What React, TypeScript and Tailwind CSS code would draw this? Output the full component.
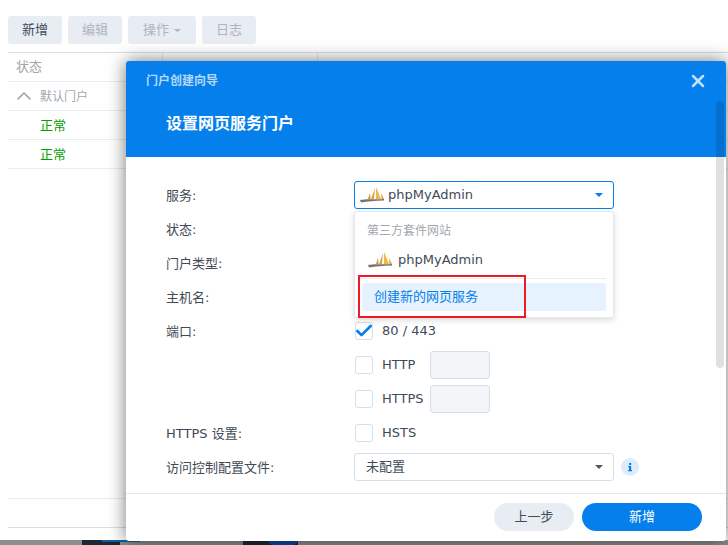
import { ChevronUp, X, Check } from "lucide-react";

const font = { fontFamily: '"DejaVu Sans", "Noto Sans CJK SC", sans-serif' };

// small sailboat style logo used for phpMyAdmin
const PmaLogo = () => (
  <svg width="24" height="16" viewBox="0 0 24 16" className="shrink-0">
    <path d="M15 1 L14 12 H11 Z" fill="#e3a436" />
    <path d="M16 0 L16 12 H21 Z" fill="#f1b648" />
    <path d="M10 6 L8 12 H10.5 Z" fill="#c98f3a" />
    <path d="M21 6 L21.5 12 H24 Z" fill="#d8a547" />
    <path d="M0 13 C5 11.5 14 12.5 24 12 V13.5 C15 14 7 14 1 15.5 Z" fill="#77736c" />
  </svg>
);

const Caret = ({ color, w, h }: { color: string; w: number; h: number }) => (
  <svg width={w} height={h} viewBox={`0 0 ${w} ${h}`} className="shrink-0">
    <path d={`M0 0 H${w} L${w / 2} ${h} Z`} fill={color} />
  </svg>
);

const Checkbox = ({ checked }: { checked?: boolean }) => (
  <div className="w-[18px] h-[18px] rounded-[3px] border border-[#d5dfe9] bg-white flex items-center justify-center shrink-0">
    {checked && <Check size={20} strokeWidth={3.2} className="text-[#057feb] shrink-0" />}
  </div>
);

const InfoDot = () => (
  <svg width="18" height="18" viewBox="0 0 18 18">
    <circle cx="9" cy="9" r="9" fill="#dcecfb" />
    <rect x="8" y="5" width="2.2" height="2" fill="#057feb" />
    <path d="M7.2 8 H10.2 V12 H11 V13.2 H7.2 V12 H8 V9.2 H7.2 Z" fill="#057feb" />
  </svg>
);

const toolbar = ["编辑", "操作", "日志"];

const fieldLabels = ["状态:", "门户类型:", "主机名:", "端口:"];

export default function App() {
  return (
    <div style={font} className="relative w-[728px] h-[545px] overflow-hidden bg-[#8d8d8d] text-[13px] text-[#414b55]">
      {/* desktop peeking out under the window */}
      <div className="absolute left-[82px] top-[540px] w-[38px] h-[5px] bg-[#1f2733]" />
      <div className="absolute left-[102px] top-[540px] w-[38px] h-[2px] bg-[#0f5f9e]" />
      <div className="absolute left-[243px] top-[540px] w-[55px] h-[5px] bg-[#1f2733]" />
      <div className="absolute left-[268px] top-[540px] w-[30px] h-[5px] rounded-b-full bg-[#0f47a0]" />

      {/* page behind the dialog */}
      <div className="relative h-[540px] bg-white pl-2">
        <div className="flex gap-1.5 pt-4">
          <div className="w-[54px] h-[28px] rounded-[3px] bg-[#e8ecf3] flex items-center justify-center text-[#414b55]">新增</div>
          {toolbar.map((t) => (
            <div
              key={t}
              className={`${t === "操作" ? "w-[68px] gap-[5px]" : "w-[54px]"} h-[28px] rounded-[3px] bg-[#e8ecf3] flex items-center justify-center text-[#b0b5bb]`}
            >
              {t}
              {t === "操作" && <Caret color="#b0b5bb" w={7} h={3} />}
            </div>
          ))}
        </div>
        <div className="mt-[8px] border-t border-[#d5dfe9] h-[29px] flex items-center relative">
          <span className="pl-2 text-[#a2a7ad]">状态</span>
          <div className="absolute left-[154px] top-0 h-[29px] w-px bg-[#e8ecf3]" />
          <div className="absolute left-[309px] top-0 h-[29px] w-px bg-[#e8ecf3]" />
        </div>
        <div className="border-t border-[#e8ecf3] h-[29px] flex items-center pl-1 gap-1 text-[12px] text-[#a2a7ad]">
          <ChevronUp size={24} strokeWidth={1.75} className="shrink-0" />
          <span className="pt-px">默认门户</span>
        </div>
        <div className="border-t border-[#e8ecf3] h-[29px] flex items-center pl-8 pt-0.5 text-[#00a000]">正常</div>
        <div className="border-t border-[#e8ecf3] h-[29px] flex items-center pl-8 pt-0.5 text-[#00a000]">正常</div>
        <div className="border-t border-[#e8ecf3]" />
        <div className="mt-[329px] border-t border-[#e8ecf3] h-[29px]" />
        <div className="border-t border-[#d5dfe9]" />
      </div>

      {/* dialog */}
      <div className="absolute left-[126px] top-[61px] w-[600px] h-[480px] bg-white rounded-[3px] shadow-[0_0_18px_rgba(0,0,0,0.55)] flex flex-col overflow-hidden">
        <div className="h-[96px] bg-[#057feb] relative shrink-0">
          <div className="pl-5 pt-[11px] text-[12px] leading-[18px] font-bold text-[#b4d9fa]">门户创建向导</div>
          <div className="pl-10 mt-[22px] text-[16px] leading-[24px] font-bold text-white">设置网页服务门户</div>
          <X size={20} strokeWidth={3} className="absolute right-[18px] top-[10px] text-[#c0dffa]" />
        </div>

        <div className="flex-1 flex pl-10 relative">
          <div className="w-[188px] pt-[25px] flex flex-col">
            <div className="h-[28px] flex items-center">服务:</div>
            <div className="mt-[6px] flex flex-col gap-[6px]">
              {fieldLabels.map((l) => (
                <div key={l} className="h-[28px] flex items-center">{l}</div>
              ))}
            </div>
            <div className="mt-[74px] h-[28px] flex items-center">HTTPS 设置:</div>
            <div className="mt-[6px] h-[28px] flex items-center whitespace-nowrap">访问控制配置文件:</div>
          </div>

          <div className="pt-[24px] w-[260px]">
            <div className="h-[28px] rounded-[3px] border border-[#057feb] flex items-center pl-[5px] pr-[10px] gap-1">
              <PmaLogo />
              <span className="flex-1">phpMyAdmin</span>
              <Caret color="#057feb" w={8} h={4} />
            </div>
            <div className="h-[108px]" />
            <div className="flex flex-col ml-px">
              <div className="h-[28px] mb-[3px] flex items-center"><Checkbox checked /><span className="ml-[9px]">80 / 443</span></div>
              <div className="h-[34px] flex items-center"><Checkbox /><span className="ml-[9px] w-[48px]">HTTP</span><div className="w-[60px] h-[28px] rounded-[3px] border border-[#d5dfe9] bg-[#f3f5f8]" /></div>
              <div className="h-[34px] flex items-center"><Checkbox /><span className="ml-[9px] w-[48px]">HTTPS</span><div className="w-[60px] h-[28px] rounded-[3px] border border-[#d5dfe9] bg-[#f3f5f8]" /></div>
              <div className="h-[34px] flex items-center"><Checkbox /><span className="ml-[9px]">HSTS</span></div>
            </div>
            <div className="mt-[3px] h-[28px] rounded-[3px] border border-[#d5dfe9] flex items-center pl-[11px] pr-[10px] w-[260px]">
              <span className="flex-1">未配置</span>
              <Caret color="#4f5963" w={8} h={4} />
            </div>
          </div>
          <div className="absolute left-[495px] top-[301px]">
            <InfoDot />
          </div>

          {/* dropdown menu */}
          <div className="absolute left-[228px] top-[54px] w-[260px] h-[107px] bg-white rounded-[3px] border border-[#e3e9f0] shadow-[0_2px_6px_rgba(0,0,0,0.15)] px-[7px]">
            <div className="pt-[10px] pl-[5px] text-[12px] text-[#a2a7ad] leading-[18px]">第三方套件网站</div>
            <div className="mt-[6px] h-[28px] flex items-center pl-[6px] gap-[6px]">
              <PmaLogo />
              <span>phpMyAdmin</span>
            </div>
            <div className="mt-1 border-t border-[#e8ecf3]" />
            <div className="mt-1 h-[28px] rounded-[3px] bg-[#e6f2fd] flex items-center pl-3 text-[#057feb]">创建新的网页服务</div>
          </div>
          {/* red annotation */}
          <div className="absolute left-[232px] top-[118px] w-[168px] h-[43px] border-2 border-[#ed1c24]" />
        </div>

        <div className="h-[48px] shrink-0 border-t border-[#e3e8ef] flex items-center justify-end gap-2 pr-6 pb-px">
          <div className="w-[80px] h-[28px] rounded-full bg-[#e8ecf3] flex items-center justify-center">上一步</div>
          <div className="w-[120px] h-[28px] rounded-full bg-[#057feb] flex items-center justify-center text-white">新增</div>
        </div>

        {/* scrollbar */}
        <div className="absolute right-[2px] top-[40px] w-2 h-[267px] rounded-full bg-black/[0.12]" />
      </div>
    </div>
  );
}
